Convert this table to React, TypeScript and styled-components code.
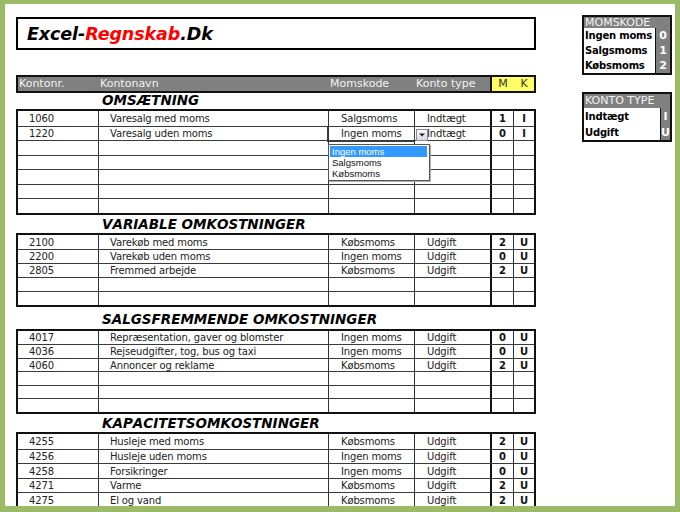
import React from 'react';
import styled, { createGlobalStyle } from 'styled-components';

const Global = createGlobalStyle`
  * { box-sizing: border-box; }
  html, body { margin: 0; padding: 0; background: #9bbb69; }
  body { font-family: "DejaVu Sans", Verdana, sans-serif; }
`;

const Panel = styled.div`
  margin: 4px 5px 0 5px;
  height: 502px;
  background: #fff;
  overflow: hidden;
  display: flex;
  align-items: flex-start;
  padding: 11px 0 0 11px;
`;

const Main = styled.div`
  width: 520px;
  margin-top: 2px;
  display: flex;
  flex-direction: column;
`;

const TitleBox = styled.div`
  height: 33px;
  border: 2px solid #000;
  display: flex;
  align-items: center;
  padding-left: 9px;
  font-family: "DejaVu Sans", Verdana, sans-serif;
  font-weight: bold;
  font-style: italic;
  font-size: 17.5px;
  letter-spacing: -0.1px;
  color: #000;
`;

const Red = styled.span`
  color: #ff0000;
`;

const HeaderBar = styled.div`
  margin-top: 25px;
  height: 18px;
  border: 2px solid #111;
  background: #808080;
  display: grid;
  grid-template-columns: 81px 230px 86px 75px 1fr;
`;

const HeadCell = styled.div`
  font-size: 11px;
  line-height: 14px;
  color: #f2f2f2;
  padding-left: 1px;
  white-space: nowrap;
`;

const FlagHead = styled.div`
  background: #ffff66;
  border-left: 2px solid #111;
  display: grid;
  grid-template-columns: 22px 1fr;
  font-size: 11px;
  line-height: 14px;
  color: #333;
  text-align: center;
`;

const SectionTitle = styled.div<{ $h: number }>`
  height: ${(p) => p.$h}px;
  display: flex;
  align-items: flex-end;
  padding: 0 0 2px 86px;
  font-weight: bold;
  font-style: italic;
  font-size: 13.5px;
  line-height: 1;
  font-kerning: none;
  font-variant-ligatures: none;
  color: #000;
  white-space: nowrap;
`;

const Table = styled.div`
  border: 2px solid #111;
`;

const Row = styled.div<{ $h: number }>`
  display: grid;
  grid-template-columns: 81px 230px 86px 77px 22px 1fr;
  height: ${(p) => p.$h}px;
  & + & {
    border-top: 1px solid #3a3a3a;
  }
`;

type Kind = 'num' | 'name' | 'moms' | 'type' | 'flag' | 'last';

const Cell = styled.div<{ $kind: Kind }>`
  position: relative;
  font-size: 10px;
  letter-spacing: -0.15px;
  color: #222;
  white-space: nowrap;
  display: flex;
  align-items: center;
  padding-left: ${(p) =>
    p.$kind === 'num' || p.$kind === 'name' ? 11 : p.$kind === 'moms' || p.$kind === 'type' ? 12 : 0}px;
  border-right: ${(p) =>
    p.$kind === 'last' ? 'none' : p.$kind === 'type' ? '2px solid #111' : '1px solid #333'};
  ${(p) =>
    p.$kind === 'flag' || p.$kind === 'last'
      ? 'justify-content: center; font-weight: bold; color: #111; letter-spacing: 0;'
      : ''}
`;

const DropOutline = styled.div`
  position: absolute;
  left: -2px;
  top: -1px;
  right: -1px;
  bottom: -2px;
  border: 1.5px solid #3c3c3c;
  pointer-events: none;
`;

const DropButton = styled.div`
  position: absolute;
  left: 87px;
  top: 2px;
  width: 12px;
  height: 12px;
  border: 1px solid #8c8c8c;
  background: linear-gradient(#f6f7f9, #d7dbe3);
  display: flex;
  align-items: center;
  justify-content: center;
  z-index: 2;
`;

const DropList = styled.div`
  position: absolute;
  left: -1px;
  top: 17px;
  width: 102px;
  border: 1px solid #555;
  background: #fff;
  box-shadow: 1px 1px 0 #b0b0b0;
  padding: 1px 0 1px 1px;
  z-index: 3;
  font-family: "Liberation Sans", Arial, sans-serif;
  letter-spacing: 0;
`;

const DropItem = styled.div<{ $active?: boolean }>`
  height: 11px;
  line-height: 11px;
  font-size: 9.5px;
  padding-left: 2px;
  margin-right: 2px;
  color: ${(p) => (p.$active ? '#fff' : '#111')};
  background: ${(p) => (p.$active ? '#3399ff' : 'transparent')};
`;

const Side = styled.div`
  margin-left: 46px;
  display: flex;
  flex-direction: column;
`;

const LegendBox = styled.div<{ $mt: number }>`
  width: 90px;
  margin-top: ${(p) => p.$mt}px;
  border: 2px solid #111;
`;

const LegendHead = styled.div<{ $h: number }>`
  height: ${(p) => p.$h}px;
  line-height: ${(p) => p.$h}px;
  background: #808080;
  color: #f4f4f4;
  font-size: 11px;
  padding-left: 1px;
  white-space: nowrap;
`;

const LegendRow = styled.div<{ $h: number; $vw: number }>`
  display: grid;
  grid-template-columns: 1fr ${(p) => p.$vw}px;
  height: ${(p) => p.$h}px;
`;

const LegendLabel = styled.div`
  font-family: "DejaVu Sans", Verdana, sans-serif;
  font-weight: bold;
  font-size: 10px;
  letter-spacing: -0.2px;
  color: #000;
  padding-left: 1px;
  display: flex;
  align-items: center;
  border-right: 1px solid #111;
  white-space: nowrap;
  overflow: hidden;
`;

const LegendValue = styled.div`
  background: #808080;
  color: #fff;
  font-weight: bold;
  font-size: 11px;
  display: flex;
  align-items: center;
  justify-content: center;
`;

type RowData = {
  nr?: string;
  navn?: string;
  moms?: string;
  type?: string;
  m?: string;
  k?: string;
  dropdown?: boolean;
};

type Section = { title: string; titleH: number; rowH: number; rows: RowData[] };

const empty = (n: number): RowData[] => Array.from({ length: n }, () => ({}));

const sections: Section[] = [
  {
    title: 'OMSÆTNING',
    titleH: 16,
    rowH: 14.5,
    rows: [
      { nr: '1060', navn: 'Varesalg med moms', moms: 'Salgsmoms', type: 'Indtægt', m: '1', k: 'I' },
      { nr: '1220', navn: 'Varesalg uden moms', moms: 'Ingen moms', type: 'Indtægt', m: '0', k: 'I', dropdown: true },
      ...empty(5),
    ],
  },
  {
    title: 'VARIABLE OMKOSTNINGER',
    titleH: 18.5,
    rowH: 14.1,
    rows: [
      { nr: '2100', navn: 'Varekøb med moms', moms: 'Købsmoms', type: 'Udgift', m: '2', k: 'U' },
      { nr: '2200', navn: 'Varekøb uden moms', moms: 'Ingen moms', type: 'Udgift', m: '0', k: 'U' },
      { nr: '2805', navn: 'Fremmed arbejde', moms: 'Købsmoms', type: 'Udgift', m: '2', k: 'U' },
      ...empty(2),
    ],
  },
  {
    title: 'SALGSFREMMENDE OMKOSTNINGER',
    titleH: 21.5,
    rowH: 13.5,
    rows: [
      { nr: '4017', navn: 'Repræsentation, gaver og blomster', moms: 'Ingen moms', type: 'Udgift', m: '0', k: 'U' },
      { nr: '4036', navn: 'Rejseudgifter, tog, bus og taxi', moms: 'Ingen moms', type: 'Udgift', m: '0', k: 'U' },
      { nr: '4060', navn: 'Annoncer og reklame', moms: 'Købsmoms', type: 'Udgift', m: '2', k: 'U' },
      ...empty(3),
    ],
  },
  {
    title: 'KAPACITETSOMKOSTNINGER',
    titleH: 18.5,
    rowH: 14.5,
    rows: [
      { nr: '4255', navn: 'Husleje med moms', moms: 'Købsmoms', type: 'Udgift', m: '2', k: 'U' },
      { nr: '4256', navn: 'Husleje uden moms', moms: 'Ingen moms', type: 'Udgift', m: '0', k: 'U' },
      { nr: '4258', navn: 'Forsikringer', moms: 'Ingen moms', type: 'Udgift', m: '0', k: 'U' },
      { nr: '4271', navn: 'Varme', moms: 'Købsmoms', type: 'Udgift', m: '2', k: 'U' },
      { nr: '4275', navn: 'El og vand', moms: 'Købsmoms', type: 'Udgift', m: '2', k: 'U' },
      ...empty(2),
    ],
  },
];

const Dropdown = () => (
  <>
    <DropOutline />
    <DropButton>
      <svg width="6" height="4" viewBox="0 0 6 4">
        <path d="M0 0.5 H6 L3 3.5 Z" fill="#222" />
      </svg>
    </DropButton>
    <DropList>
      <DropItem $active>Ingen moms</DropItem>
      <DropItem>Salgsmoms</DropItem>
      <DropItem>Købsmoms</DropItem>
    </DropList>
  </>
);

export default function App() {
  return (
    <>
      <Global />
      <Panel>
        <Main>
          <TitleBox>
            Excel-<Red>Regnskab</Red>.Dk
          </TitleBox>
          <HeaderBar>
            <HeadCell>Kontonr.</HeadCell>
            <HeadCell>Kontonavn</HeadCell>
            <HeadCell>Momskode</HeadCell>
            <HeadCell>Konto type</HeadCell>
            <FlagHead>
              <span>M</span>
              <span>K</span>
            </FlagHead>
          </HeaderBar>
          {sections.map((s) => (
            <React.Fragment key={s.title}>
              <SectionTitle $h={s.titleH}>{s.title}</SectionTitle>
              <Table>
                {s.rows.map((r, i) => (
                  <Row key={i} $h={s.rowH}>
                    <Cell $kind="num">{r.nr}</Cell>
                    <Cell $kind="name">{r.navn}</Cell>
                    <Cell $kind="moms">
                      {r.moms}
                      {r.dropdown && <Dropdown />}
                    </Cell>
                    <Cell $kind="type">{r.type}</Cell>
                    <Cell $kind="flag">{r.m}</Cell>
                    <Cell $kind="last">{r.k}</Cell>
                  </Row>
                ))}
              </Table>
            </React.Fragment>
          ))}
        </Main>
        <Side>
          <LegendBox $mt={0}>
            <LegendHead $h={11}>MOMSKODE</LegendHead>
            {[
              ['Ingen moms', '0'],
              ['Salgsmoms', '1'],
              ['Købsmoms', '2'],
            ].map(([l, v]) => (
              <LegendRow key={l} $h={15} $vw={14}>
                <LegendLabel>{l}</LegendLabel>
                <LegendValue>{v}</LegendValue>
              </LegendRow>
            ))}
          </LegendBox>
          <LegendBox $mt={17}>
            <LegendHead $h={14}>KONTO TYPE</LegendHead>
            {[
              ['Indtægt', 'I'],
              ['Udgift', 'U'],
            ].map(([l, v]) => (
              <LegendRow key={l} $h={16} $vw={9}>
                <LegendLabel>{l}</LegendLabel>
                <LegendValue>{v}</LegendValue>
              </LegendRow>
            ))}
          </LegendBox>
        </Side>
      </Panel>
    </>
  );
}
